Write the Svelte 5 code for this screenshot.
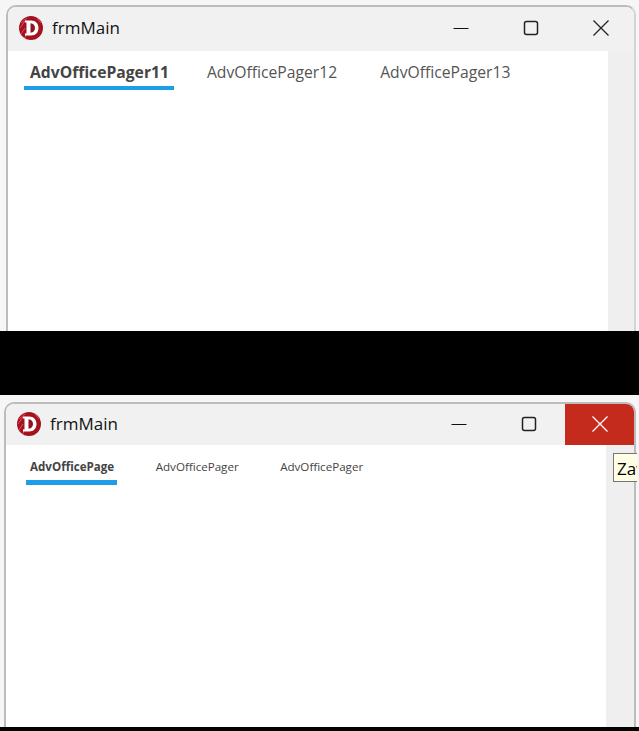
<script>
  const shots = [
    {
      cls: 'first',
      tabs: ['AdvOfficePager11', 'AdvOfficePager12', 'AdvOfficePager13'],
      hover: false
    },
    {
      cls: 'second',
      tabs: ['AdvOfficePage', 'AdvOfficePager', 'AdvOfficePager'],
      hover: true
    }
  ]
</script>

{#snippet logo()}
  <svg class="logo" width="26" height="26" viewBox="0 0 26 26">
    <circle cx="13" cy="13" r="12" fill="#a5121f" />
    <path d="M3 8 L9 3 M2 13 L7 6 M3 19 L7 13 M7 23 L8 18 M19 3 L23 8" stroke="#d8505c" stroke-width="1" fill="none" />
    <path d="M7 5.5 H13 C18 5.5 20.5 9 20.5 13 C20.5 17 18 20.5 13 20.5 H7 V18.5 H8.5 V7.5 H7 Z" fill="#fff" />
    <path d="M12.5 8.2 C15.5 8.4 17 10.4 17 13 C17 15.6 15.5 17.6 12.5 17.8 Z" fill="#8f1420" />
  </svg>
{/snippet}

<div class="page">
  {#each shots as shot}
    <section class="shot {shot.cls}">
      <div class="window">
        <header class="titlebar">
          {@render logo()}
          <span class="title">frmMain</span>
          <div class="controls">
            <button class="ctl" aria-label="Minimize">
              <svg width="16" height="16" viewBox="0 0 16 16"><path d="M0.5 8.5 H15.5" stroke="#111" stroke-width="1" /></svg>
            </button>
            <button class="ctl max" aria-label="Maximize">
              <svg width="16" height="16" viewBox="0 0 16 16"><rect x="1.5" y="1.5" width="13" height="13" rx="2" fill="none" stroke="#222" stroke-width="1.5" /></svg>
            </button>
            <button class="ctl close" class:hover={shot.hover} aria-label="Close">
              <svg width="16" height="16" viewBox="0 0 16 16"><path d="M0.5 0.5 L15.5 15.5 M15.5 0.5 L0.5 15.5" stroke={shot.hover ? '#fff' : '#222'} stroke-width="1.3" /></svg>
            </button>
          </div>
        </header>
        <div class="body">
          <main class="content">
            <nav class="tabs">
              {#each shot.tabs as tab, i}
                <div class="tab" class:active={i === 0}>{tab}</div>
              {/each}
            </nav>
          </main>
          <aside class="strip"></aside>
        </div>
      </div>
      {#if shot.hover}
        <div class="tooltip">Zav</div>
      {/if}
    </section>
    <div class="black" class:last={shot.hover}></div>
  {/each}
</div>

<style>
  :global(body) {
    margin: 0;
    background: #000;
  }
  .page {
    width: 639px;
    height: 731px;
    overflow: hidden;
    font-family: "Open Sans", "Noto Sans", sans-serif;
    background: #000;
  }
  .shot {
    position: relative;
    box-sizing: border-box;
    overflow: hidden;
    background: #f6f6f6;
  }
  .shot.first {
    height: 331px;
    padding: 5px 3px 0 6px;
  }
  .shot.second {
    height: 332px;
    padding: 7px 3px 0 4px;
  }
  .black {
    height: 64px;
    background: #000;
  }
  .black.last {
    height: 4px;
  }
  .window {
    box-sizing: border-box;
    height: 100%;
    display: flex;
    flex-direction: column;
    border: 2px solid #bcbcbc;
    border-bottom: none;
    border-radius: 10px 10px 0 0;
    background: #f0f0f0;
    overflow: hidden;
  }
  .first .window {
    border-right-color: #d4d4d4;
  }
  .titlebar {
    flex: none;
    height: 44px;
    box-sizing: border-box;
    display: flex;
    align-items: center;
    background: #f1f1f1;
    padding: 0 0 3px 10px;
  }
  .second .titlebar {
    height: 41px;
    padding-bottom: 2px;
  }
  .logo {
    flex: none;
  }
  .title {
    margin-left: 8px;
    font-size: 17px;
    color: #111;
  }
  .controls {
    margin: 0 0 -3px auto;
    display: flex;
    align-self: stretch;
  }
  .second .controls {
    margin-bottom: -2px;
  }
  .first .controls {
    margin-right: -2px;
  }
  .ctl {
    width: 70px;
    padding: 0 0 3px;
    border: none;
    background: none;
    display: flex;
    align-items: center;
    justify-content: center;
  }
  .second .ctl {
    padding-bottom: 2px;
  }
  .second .max {
    margin-right: 1px;
  }
  .second .close {
    width: 69px;
  }
  .ctl.hover {
    background: #c42b1c;
  }
  .body {
    flex: 1;
    display: flex;
    min-height: 0;
  }
  .content {
    flex: 1;
    background: #fff;
  }
  .strip {
    width: 26px;
    flex: none;
    background: #efefef;
  }
  .second .strip {
    width: 28px;
  }
  .tabs {
    display: flex;
    font-size: 15.7px;
    color: #555;
  }
  .first .tabs {
    padding: 10px 0 0 16px;
    gap: 31px;
  }
  .first .tab {
    padding: 0 6px;
    height: 25px;
    line-height: 22px;
  }
  .first .tab.active {
    padding-right: 5px;
    margin-right: -4px;
  }
  .second .tabs {
    font-size: 11.6px;
    padding: 13px 0 0 20px;
    gap: 34.5px;
  }
  .second .tab {
    padding: 0 3px 0 4px;
    height: 22px;
    line-height: 18px;
    color: #444;
  }
  .tab.active {
    font-weight: 700;
    color: #444;
    border-bottom: 4px solid #1c9fe8;
  }
  .second .tab.active {
    border-bottom-width: 5px;
  }
  .tooltip {
    position: absolute;
    left: 613px;
    top: 58px;
    width: 24px;
    height: 29px;
    box-sizing: border-box;
    padding-left: 3px;
    border: 1px solid #767676;
    border-right: none;
    overflow: hidden;
    background: #ffffe6;
    font-size: 17px;
    line-height: 29px;
    color: #000;
  }
</style>
